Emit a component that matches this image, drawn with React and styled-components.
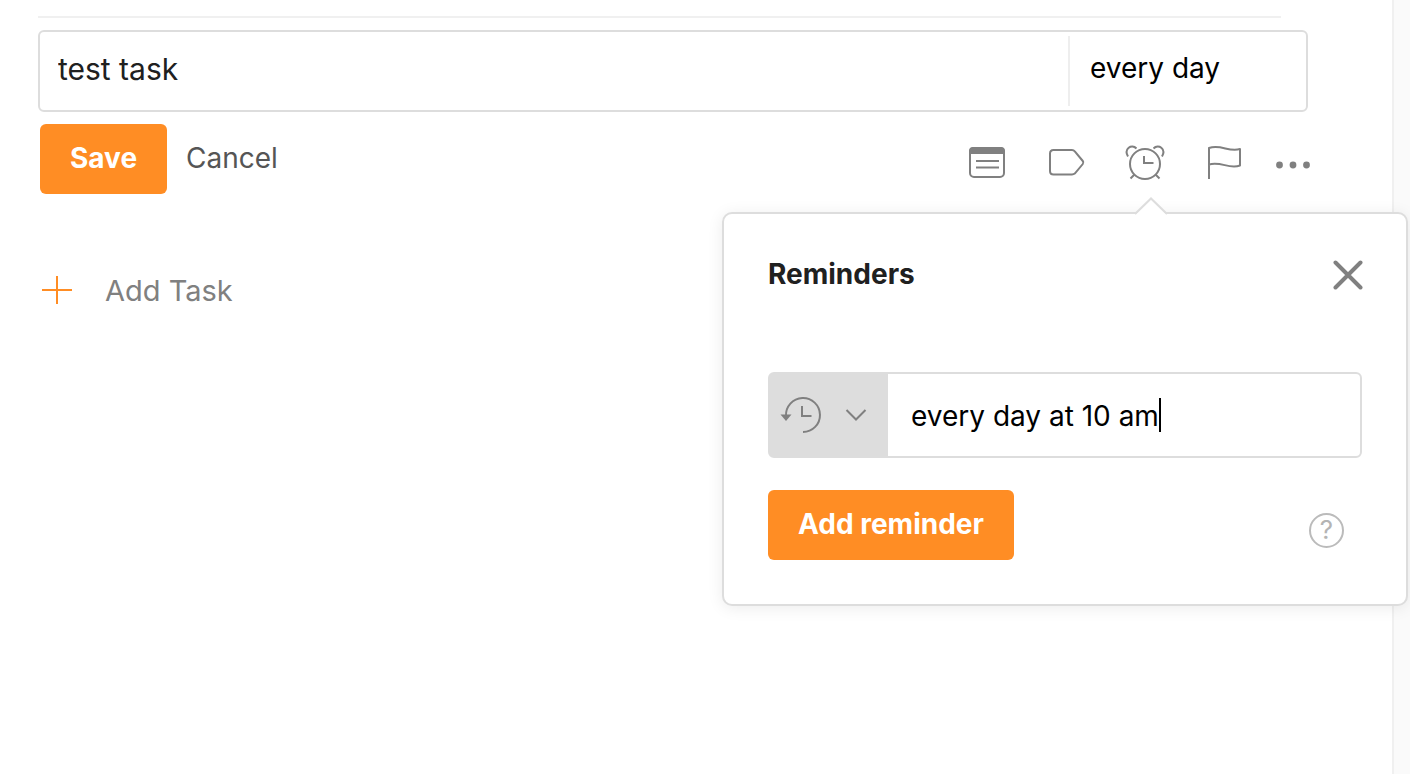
import React, { useState } from "react";
import styled, { createGlobalStyle } from "styled-components";

const GlobalStyle = createGlobalStyle`
  *, *::before, *::after { box-sizing: border-box; }
  body {
    margin: 0;
    background: #fafafa;
    color: #202020;
    font-family: Inter, "Liberation Sans", sans-serif;
    font-size: 28px;
    line-height: 34px;
  }
  button, input { font: inherit; color: inherit; }
`;

const Page = styled.div`
  display: flex;
  min-height: 100vh;
  padding-right: 16px;
`;

const Main = styled.main`
  flex: 1;
  min-width: 0;
  padding: 16px 84px 40px 38px;
  background: #fff;
  border-right: 2px solid #f0f0f0;
`;

const Divider = styled.hr`
  height: 2px;
  margin: 0 27px 12px 0;
  border: 0;
  background: #f0f0f0;
`;

const TaskBox = styled.div`
  display: flex;
  height: 82px;
  padding: 4px 0;
  background: #fff;
  border: 2px solid #ddd;
  border-radius: 6px;
`;

const TextField = styled.input`
  min-width: 0;
  padding: 0 18px 4px;
  border: 0;
  outline: 0;
  background: transparent;
`;

const TaskField = styled(TextField)`
  flex: 1;
  font-size: 30px;
`;

const DateField = styled(TextField)`
  width: 238px;
  padding-left: 20px;
  padding-bottom: 6px;
  border-left: 2px solid #eee;
  color: #000;
`;

const Actions = styled.div`
  position: relative;
  display: flex;
  align-items: center;
  height: 70px;
  margin: 12px 0 60px;
  padding-left: 2px;
`;

const PrimaryButton = styled.button`
  height: 70px;
  padding: 0 30px 2px;
  border: 0;
  border-radius: 6px;
  background: #ff8d24;
  color: #fff;
  font-weight: 700;
  cursor: pointer;
`;

const PlainButton = styled.button`
  margin-left: 19px;
  padding: 0 0 2px;
  border: 0;
  background: none;
  color: #555;
  cursor: pointer;
`;

const Toolbar = styled.div`
  display: flex;
  gap: 30px;
  margin: 8px -4px 0 auto;
`;

const ToolGroup = styled.div`
  display: flex;
  gap: 39px;
`;

const IconButton = styled.button`
  display: flex;
  align-items: center;
  justify-content: center;
  width: ${(p) => p.$width || 40}px;
  height: 40px;
  padding: 0;
  border: 0;
  background: none;
  color: #808080;
  cursor: pointer;
`;

const Icon = styled.svg`
  display: block;
  flex: none;
  fill: none;
  stroke: currentColor;
  stroke-width: 2;
`;

const Popover = styled.section`
  position: absolute;
  top: 88px;
  right: -100px;
  width: 686px;
  padding: 44px;
  background: #fff;
  border: 2px solid #ddd;
  border-radius: 10px;
  box-shadow: 0 2px 16px rgba(0, 0, 0, 0.08);
`;

const Arrow = styled.svg`
  position: absolute;
  top: -17px;
  right: 238px;
`;

const PopoverHeader = styled.header`
  display: flex;
  align-items: center;
  justify-content: space-between;
  height: 34px;
  margin-bottom: 80px;
`;

const Title = styled.h2`
  margin: 0;
  padding-bottom: 2px;
  font-size: 28px;
  font-weight: 700;
`;

const CloseButton = styled(IconButton)`
  width: 28px;
`;

const ReminderBox = styled.div`
  display: flex;
  height: 86px;
  border: 2px solid #ddd;
  border-radius: 6px;
  background: #fff;
`;

const TypeButton = styled.button`
  display: flex;
  align-items: center;
  gap: 23px;
  width: 118px;
  padding: 0 0 0 10px;
  border: 0;
  background: #ddd;
  color: #808080;
  cursor: pointer;
`;

const ReminderEntry = styled.div`
  display: flex;
  flex: 1;
  align-items: center;
  padding-left: 23px;
  color: #000;
`;

const ReminderField = styled(TextField)`
  field-sizing: content;
  height: 36px;
  padding: 2px 0 0;
  caret-color: transparent;
`;

const Caret = styled.span`
  width: 2px;
  height: 34px;
  background: #000;
`;

const PopoverFooter = styled.footer`
  display: flex;
  align-items: center;
  justify-content: space-between;
  margin-top: 32px;
`;

const HelpButton = styled.button`
  width: 35px;
  height: 35px;
  margin: 10px 18px 0 0;
  padding: 0;
  border: 2px solid #bbb;
  border-radius: 50%;
  background: none;
  color: #b4b4b4;
  font-size: 26px;
  font-weight: 400;
  line-height: 30px;
  cursor: pointer;
`;

const AddTask = styled.button`
  display: flex;
  align-items: center;
  gap: 33px;
  height: 74px;
  padding: 0 0 0 4px;
  border: 0;
  background: none;
  color: #808080;
  font-size: 29px;
  cursor: pointer;
`;

const PlusIcon = styled(Icon)`
  color: #ff8d24;
`;

const NoteIcon = () => (
  <Icon width="40" height="40" viewBox="0 0 40 40" aria-hidden="true">
    <rect x="3" y="5" width="34" height="29" rx="4" />
    <path d="M3 10V8q0-3 3-3h28q3 0 3 3v2z" fill="currentColor" />
    <path d="M9 18h23M9 24.500h23" />
  </Icon>
);

const TagIcon = () => (
  <Icon width="40" height="40" viewBox="0 0 40 40" aria-hidden="true">
    <path d="M7.500 7h18.500q1.700 0 2.800 1.400l8 9.600q1.200 1.500 0 3l-8 9.600Q27.700 31.500 26 31.500h-18.500Q4 31.500 4 28V10.500Q4 7 7.500 7z" />
  </Icon>
);

const AlarmIcon = () => (
  <Icon width="40" height="40" viewBox="0 0 40 40" aria-hidden="true">
    <circle cx="20" cy="21" r="15" />
    <path d="M19 13v7h9.500M9.500 31.500l-4 4M30.500 31.500l4 4" />
    <path d="M3 13.500C-1.500 6 6.500 .5 11.500 5.500M37 13.500C41.500 6 33.500 .5 28.500 5.500" />
  </Icon>
);

const FlagIcon = () => (
  <Icon width="40" height="40" viewBox="0 0 40 40" aria-hidden="true">
    <path d="M5 36V5c12-4 20 4.500 31 1v16.500c-11 4-19-4.500-31-1" strokeLinejoin="round" />
  </Icon>
);

const MoreIcon = () => (
  <Icon width="38" height="40" viewBox="0 0 38 40" aria-hidden="true">
    <g fill="currentColor" stroke="none">
      <circle cx="5.500" cy="22" r="3.400" />
      <circle cx="19" cy="22" r="3.400" />
      <circle cx="32.500" cy="22" r="3.400" />
    </g>
  </Icon>
);

const CloseIcon = () => (
  <Icon width="30" height="30" viewBox="0 0 30 30" aria-hidden="true">
    <path d="M2.500 2.500l25 25M27.500 2.500l-25 25" strokeWidth="4" strokeLinecap="round" />
  </Icon>
);

const HistoryIcon = () => (
  <Icon width="42" height="40" viewBox="0 0 42 40" aria-hidden="true">
    <path d="M6 21A17 17 0 1 1 23 37" />
    <path d="M22 11v10h9.500" />
    <path d="M.5 19.500h11L6 26z" fill="currentColor" stroke="none" />
  </Icon>
);

const ChevronIcon = () => (
  <Icon width="22" height="14" viewBox="0 0 22 14" aria-hidden="true">
    <path d="M1.500 2l9.500 9.500L20.500 2" />
  </Icon>
);

function ReminderPopover() {
  const [reminder, setReminder] = useState("every day at 10 am");
  return (
    <Popover aria-labelledby="reminders-title">
      <Arrow width="34" height="18" viewBox="0 0 34 18" aria-hidden="true">
        <path d="M1 18L17 2l16 16z" fill="#fff" />
        <path d="M1 17L17 1.500 33 17" fill="none" stroke="#ddd" strokeWidth="2" />
      </Arrow>
      <PopoverHeader>
        <Title id="reminders-title">Reminders</Title>
        <CloseButton aria-label="Close"><CloseIcon /></CloseButton>
      </PopoverHeader>
      <ReminderBox>
        <TypeButton aria-label="Reminder type" aria-haspopup="listbox">
          <HistoryIcon />
          <ChevronIcon />
        </TypeButton>
        <ReminderEntry>
          <ReminderField
            aria-label="Reminder time"
            value={reminder}
            onChange={(e) => setReminder(e.target.value)}
          />
          <Caret />
        </ReminderEntry>
      </ReminderBox>
      <PopoverFooter>
        <PrimaryButton>Add reminder</PrimaryButton>
        <HelpButton aria-label="Help">?</HelpButton>
      </PopoverFooter>
    </Popover>
  );
}

export default function App() {
  return (
    <>
      <GlobalStyle />
      <Page>
        <Main>
          <Divider />
          <TaskBox>
            <TaskField aria-label="Task name" defaultValue="test task" />
            <DateField aria-label="Due date" defaultValue="every day" />
          </TaskBox>
          <Actions>
            <PrimaryButton>Save</PrimaryButton>
            <PlainButton>Cancel</PlainButton>
            <Toolbar>
              <ToolGroup>
                <IconButton aria-label="Project"><NoteIcon /></IconButton>
                <IconButton aria-label="Labels"><TagIcon /></IconButton>
                <IconButton aria-label="Reminders"><AlarmIcon /></IconButton>
                <IconButton aria-label="Priority"><FlagIcon /></IconButton>
              </ToolGroup>
              <IconButton aria-label="More" $width={38}><MoreIcon /></IconButton>
            </Toolbar>
            <ReminderPopover />
          </Actions>
          <AddTask>
            <PlusIcon width="30" height="30" viewBox="0 0 30 30" aria-hidden="true">
              <path d="M0 14h30M15 0v28" />
            </PlusIcon>
            Add Task
          </AddTask>
        </Main>
      </Page>
    </>
  );
}
